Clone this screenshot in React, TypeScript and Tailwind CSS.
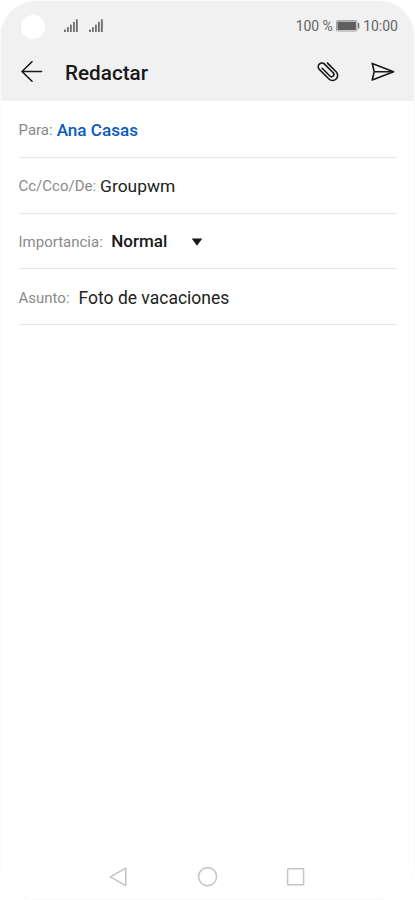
import React from 'react';

const SignalIcon: React.FC = () => (
  <svg className="h-[14px] w-[14px]" viewBox="0 0 14 14" fill="#6f6f6f">
    <rect x="0" y="10.4" width="1.9" height="2.6" rx="0.6" />
    <rect x="3" y="8" width="1.8" height="5" rx="0.6" />
    <rect x="6" y="5.5" width="1.8" height="7.5" rx="0.6" />
    <rect x="9" y="2.8" width="1.8" height="10.2" rx="0.6" />
    <rect x="11.9" y="0.2" width="1.9" height="12.8" rx="0.6" />
  </svg>
);

const BatteryIcon: React.FC = () => (
  <svg className="h-3 w-6" viewBox="0 0 24 12">
    <rect x="0.5" y="0.6" width="20.4" height="10.4" rx="1" fill="none" stroke="#8c8c8c" strokeWidth="0.8" />
    <rect x="1.5" y="1.6" width="18.4" height="8.4" fill="#5f5f5f" />
    <rect x="21.9" y="3" width="1.4" height="5.6" rx="0.6" fill="#6f6f6f" />
  </svg>
);

const PaperclipIcon: React.FC = () => (
  <svg className="h-6 w-6" viewBox="-12 -12 24 24" fill="none" stroke="#191919" strokeWidth="1.6" strokeLinecap="round">
    <path
      transform="rotate(45)"
      d="M-6.6-5.9H5.6a5.1 5.1 0 0 1 0 10.2H-8a3.7 3.7 0 0 1 0-7.4H4.2a2.3 2.3 0 0 1 0 4.6H-6.8"
    />
  </svg>
);

const SendIcon: React.FC = () => (
  <svg className="h-5 w-6" viewBox="0 0 24 20" fill="none" stroke="#191919" strokeWidth="1.6" strokeLinejoin="round">
    <path d="M1.2 1.4 22.6 9.7 1.2 18 3.2 9.7Z" />
    <path d="M3.2 9.7H22" />
  </svg>
);

interface RowProps {
  label: string;
  children: React.ReactNode;
  gap: string;
}

const Row: React.FC<RowProps> = ({ label, children, gap }) => (
  <div className={`flex h-[55.75px] items-center border-b border-[#e8e8e8] pt-[2.5px] text-[17.4px] text-[#222222] ${gap}`}>
    <span className="text-[15px] text-[#8a8a8a]">{label}</span>
    {children}
  </div>
);

const App: React.FC = () => {
  return (
    <div className="h-[900px] w-[415px] bg-white font-['Roboto',sans-serif]">
      <div className="flex h-[900px] flex-col overflow-hidden rounded-[36px] border border-[#fafafa] bg-white">
        <header className="h-[100px] bg-[#f1f1f1]">
          <div className="flex h-[50px] items-center pl-[20px] pr-[16px]">
            <div className="mt-[2px] h-6 w-6 rounded-full bg-white" />
            <div className="ml-[19px] flex gap-[11px]">
              <SignalIcon />
              <SignalIcon />
            </div>
            <div className="ml-auto flex items-center text-[14px] text-[#666666]">
              <span className="tracking-[-0.1px]">100 %</span>
              <span className="ml-[3.5px] mr-[3px]">
                <BatteryIcon />
              </span>
              <span>10:00</span>
            </div>
          </div>
          <div className="flex h-[42px] items-center pl-[20px] pr-[19px]">
            <svg className="h-[22px] w-[22px]" viewBox="0 0 22 22" fill="none" stroke="#191919" strokeWidth="1.6" strokeLinecap="round" strokeLinejoin="round">
              <path d="M20.5 10.5H1M11 .8 1 10.5l10 9.7" />
            </svg>
            <h1 className="ml-[22px] pt-[3px] text-[20.7px] font-medium text-[#191919]">Redactar</h1>
            <div className="ml-auto flex items-center gap-[31.5px]">
              <PaperclipIcon />
              <SendIcon />
            </div>
          </div>
        </header>

        <main className="flex-1 pl-[17.5px] pr-[17.5px] pt-px">
          <Row label="Para:" gap="gap-[4px]">
            <span className="text-[17.1px] font-medium text-[#0a5bbe]">Ana Casas</span>
          </Row>
          <Row label="Cc/Cco/De:" gap="gap-[4px]">
            <span>Groupwm</span>
          </Row>
          <Row label="Importancia:" gap="gap-[8.5px]">
            <span className="text-[17px] font-medium text-[#191919]">Normal</span>
            <svg className="ml-[15px] h-[8px] w-[12px]" viewBox="0 0 12 8" fill="#191919">
              <path d="M.7 .5h10.6L6 7.8Z" />
            </svg>
          </Row>
          <Row label="Asunto:" gap="gap-[9px]">
            <span className="text-[17.5px]">Foto de vacaciones</span>
          </Row>
        </main>

        <nav className="flex h-[45px] items-center justify-center gap-[68.3px]">
          <svg className="h-5 w-5" viewBox="0 0 20 20" fill="none" stroke="#c4c4c4" strokeWidth="1.5" strokeLinejoin="round">
            <path d="M16.8 1.2v17.4L1.3 9.9Z" />
          </svg>
          <svg className="h-5 w-5" viewBox="0 0 20 20" fill="none" stroke="#c4c4c4" strokeWidth="1.5">
            <circle cx="9.6" cy="9.7" r="9" />
          </svg>
          <svg className="h-5 w-5" viewBox="0 0 20 20" fill="none" stroke="#c4c4c4" strokeWidth="1.5">
            <rect x="1.6" y="1.7" width="16" height="16" rx="0.8" />
          </svg>
        </nav>
      </div>
    </div>
  );
};

export default App;
